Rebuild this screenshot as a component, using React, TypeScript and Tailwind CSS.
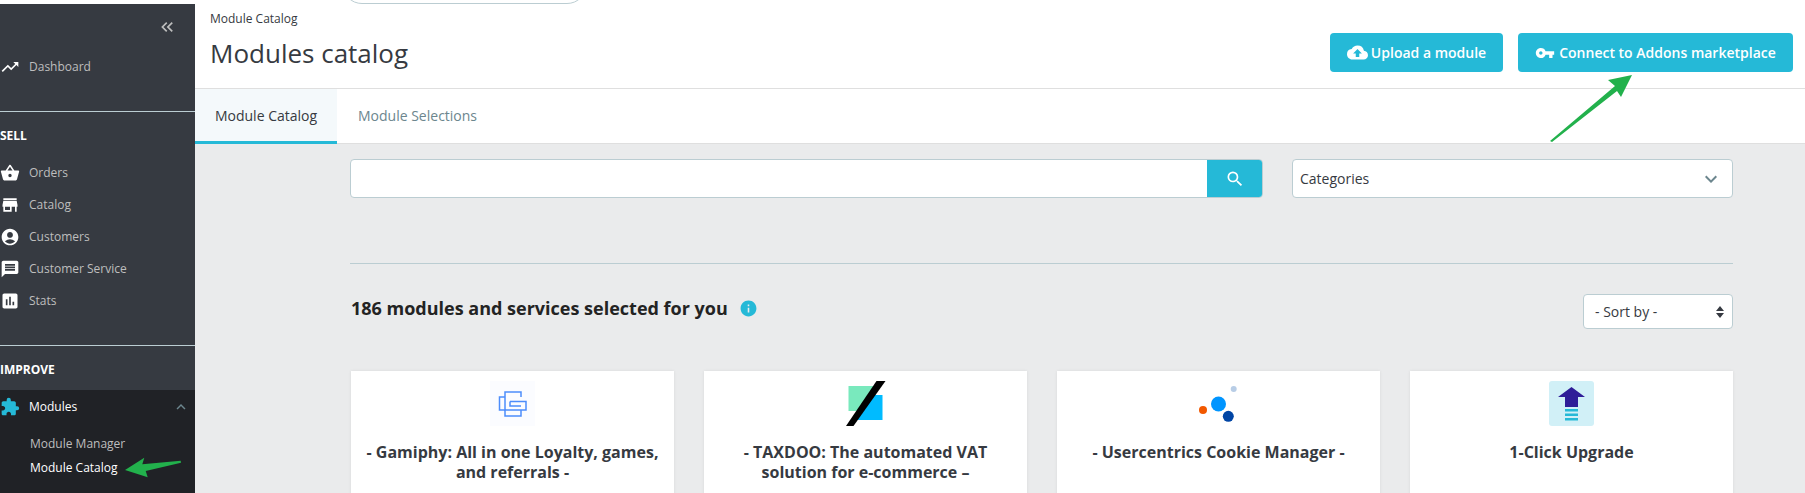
import type { ReactNode } from "react";
import {
  MdAccountCircle,
  MdAssessment,
  MdCloudUpload,
  MdExtension,
  MdInfo,
  MdKeyboardArrowDown,
  MdKeyboardArrowUp,
  MdKeyboardDoubleArrowLeft,
  MdMessage,
  MdSearch,
  MdShoppingBasket,
  MdStore,
  MdTrendingUp,
  MdVpnKey,
} from "react-icons/md";

function NavItem({ icon, label }: { icon: ReactNode; label: string }) {
  return (
    <div className="flex h-8 items-center text-[12px] text-[#bebebe]">
      <span className="flex w-[29px] shrink-0 items-center text-white">{icon}</span>
      {label}
    </div>
  );
}

function Sidebar() {
  return (
    <aside className="flex h-[489px] w-[195px] shrink-0 flex-col overflow-hidden bg-[#363a41]">
      <div className="flex h-[45px] items-center justify-end pr-[18px] text-[#bebebe]">
        <MdKeyboardDoubleArrowLeft size={20} />
      </div>
      <div className="flex h-[36px] items-center text-[12px] text-[#bebebe]">
        <span className="flex w-[29px] items-center text-white">
          <MdTrendingUp size={20} />
        </span>
        Dashboard
      </div>
      <div className="mt-[26px] border-t border-[#bbcdd2]" />
      <div className="mt-[14px] h-[19px] text-[12px] leading-[19px] font-bold text-white">SELL</div>
      <div className="mt-[12px]">
        <NavItem icon={<MdShoppingBasket size={20} />} label="Orders" />
        <NavItem icon={<MdStore size={20} />} label="Catalog" />
        <NavItem icon={<MdAccountCircle size={20} />} label="Customers" />
        <NavItem icon={<MdMessage size={20} />} label="Customer Service" />
        <NavItem icon={<MdAssessment size={20} />} label="Stats" />
      </div>
      <div className="mt-[28px] border-t border-[#bbcdd2]" />
      <div className="mt-[14px] h-[19px] text-[12px] leading-[19px] font-bold text-white">IMPROVE</div>
      <div className="mt-[11px] flex-1 bg-[#202226]">
        <div className="flex h-[33px] items-center text-[12px] text-white">
          <span className="flex w-[29px] items-center text-[#25b9d7]">
            <MdExtension size={20} />
          </span>
          Modules
          <MdKeyboardArrowUp size={18} className="ml-auto mr-[5px] text-[#6c868e]" />
        </div>
        <div className="mt-[9px] flex h-6 items-center pl-[30px] text-[12px] text-[#bebebe]">Module Manager</div>
        <div className="flex h-6 items-center pl-[30px] text-[12px] text-white">Module Catalog</div>
      </div>
    </aside>
  );
}

function Card({ logo, title }: { logo: ReactNode; title: ReactNode }) {
  return (
    <div className="h-[140px] bg-white px-3 pt-[10px] text-center shadow-[0_0_3px_rgba(0,0,0,0.08)]">
      <div className="flex h-[45px] justify-center">{logo}</div>
      <h3 className="mt-[16px] text-[16px] leading-[20px] font-bold text-[#363a41]">{title}</h3>
    </div>
  );
}

export default function App() {
  return (
    <div className="relative h-[493px] overflow-hidden bg-white font-['Open_Sans',sans-serif]">
      <div className="h-1 overflow-hidden pl-[342px]">
        <div className="-mt-[36px] h-[40px] w-[245px] rounded-full border border-[#bbcdd2]" />
      </div>
      <div className="flex">
        <Sidebar />
        <main className="min-w-0 flex-1">
          <header className="h-[85px] border-b border-[#dfdfdf] pl-[15px] pr-3">
            <div className="flex justify-between">
              <div>
                <div className="mt-[7px] text-[12px] leading-4 text-[#363a41]">Module Catalog</div>
                <h1 className="mt-[8px] text-[26px] leading-[36px] text-[#363a41]">Modules catalog</h1>
              </div>
              <div className="mt-[29px] flex gap-[15px]">
                <button className="flex h-[39px] w-[173px] items-center justify-center gap-[3px] rounded bg-[#25b9d7] text-[14px] font-semibold text-white">
                  <MdCloudUpload size={21} />
                  Upload a module
                </button>
                <button className="flex h-[39px] w-[275px] items-center justify-center gap-[4px] rounded bg-[#25b9d7] text-[14px] font-semibold text-white">
                  <MdVpnKey size={20} />
                  Connect to Addons marketplace
                </button>
              </div>
            </div>
          </header>
          <nav className="flex h-[55px] border-b border-[#dfdfdf] text-[14px]">
            <div className="flex h-[55px] w-[142px] items-center justify-center border-b-[3px] border-[#25b9d7] bg-[#f4f9fb] text-[#363a41]">
              Module Catalog
            </div>
            <div className="flex h-[52px] items-center pl-[21px] text-[#6c868e]">Module Selections</div>
          </nav>
          <section className="h-[349px] bg-[#eaebec] pl-[155px] pr-[72px] pt-[15px]">
            <div className="flex gap-[29px]">
              <div className="flex h-[39px] w-[913px] overflow-hidden rounded border border-[#bbcdd2] bg-white">
                <div className="flex-1" />
                <div className="-my-px -mr-px flex w-[56px] items-center justify-center bg-[#25b9d7] text-white">
                  <MdSearch size={20} />
                </div>
              </div>
              <div className="flex h-[39px] flex-1 items-center justify-between rounded border border-[#bbcdd2] bg-white pl-[7px] pr-[9px] text-[14px] text-[#363a41]">
                Categories
                <MdKeyboardArrowDown size={24} className="text-[#6c868e]" />
              </div>
            </div>
            <div className="mt-[65px] border-t border-[#bbcdd2]" />
            <div className="mt-[30px] flex h-[35px] items-start justify-between">
              <div className="ml-px flex h-[28px] items-center gap-[11px] text-[18px] font-bold text-[#232323]">
                186 modules and services selected for you
                <MdInfo size={19} className="text-[#25b9d7]" />
              </div>
              <div className="flex h-[35px] w-[150px] items-center justify-between rounded border border-[#bbcdd2] bg-white pl-[11px] pr-[8px] text-[14px] text-[#363a41]">
                - Sort by -
                <svg viewBox="0 0 8 12" className="h-3 w-2" fill="#363a41">
                  <path d="M4 0 8 5H0zM0 7h8l-4 5z" />
                </svg>
              </div>
            </div>
            <div className="ml-px mt-[42px] grid grid-cols-4 gap-[30px]">
              <Card
                title="- Gamiphy: All in one Loyalty, games, and referrals -"
                logo={
                  <svg viewBox="0 0 45 45" className="h-[45px] w-[45px]" fill="none" stroke="#4d8dfb" strokeWidth="1.5">
                    <rect width="45" height="45" fill="#fbfcff" stroke="none" />
                    <path d="M15 16V11H31V16" />
                    <path d="M15 16H9.500V29H15V35H31V29" />
                    <path d="M15 16V29H31" />
                    <path d="M20 20.500H36V29H31" />
                    <path d="M20 20.500V25H31" />
                  </svg>
                }
              />
              <Card
                title="- TAXDOO: The automated VAT solution for e-commerce –"
                logo={
                  <svg viewBox="0 0 40 45" className="h-[45px] w-10">
                    <path d="M2.500 5H29.500L14 30H2.500z" fill="#79e9bd" />
                    <path d="M24 14H36.500V39H11z" fill="#00bbff" />
                    <path d="M30.500 0h9L7.500 45H0z" fill="#000" />
                  </svg>
                }
              />
              <Card
                title="- Usercentrics Cookie Manager -"
                logo={
                  <svg viewBox="0 0 45 45" className="h-[45px] w-[45px]">
                    <circle cx="37.700" cy="8" r="3" fill="#b8cde6" />
                    <circle cx="22.500" cy="23" r="7.500" fill="#0095ff" />
                    <circle cx="7" cy="29" r="4" fill="#f25800" />
                    <circle cx="32.300" cy="35.300" r="5.500" fill="#0045a5" />
                  </svg>
                }
              />
              <Card
                title="1-Click Upgrade"
                logo={
                  <svg viewBox="0 0 45 45" className="h-[45px] w-[45px]">
                    <rect width="45" height="45" rx="3" fill="#d1f0f7" />
                    <path d="M22.500 6 36 16h-7v10H16V16H9z" fill="#2f1d98" />
                    <path d="M16 28h13v2.500H16zM16 32.500h13V35H16zM16 37h13v2.500H16z" fill="#25b9d7" />
                  </svg>
                }
              />
            </div>
          </section>
        </main>
      </div>
      <svg className="absolute left-0 top-0 h-[493px] w-[1805px] pointer-events-none" viewBox="0 0 1805 493" fill="#22b14c">
        <path d="M125 470 144.300 457.700 142.300 464.300 180.700 460.700 181 462.700 145.700 471 147.700 477.300z" />
        <path d="M1632 75 1608 80 1615 86 1550 141 1552 142 1617 91 1621 97z" />
      </svg>
    </div>
  );
}
